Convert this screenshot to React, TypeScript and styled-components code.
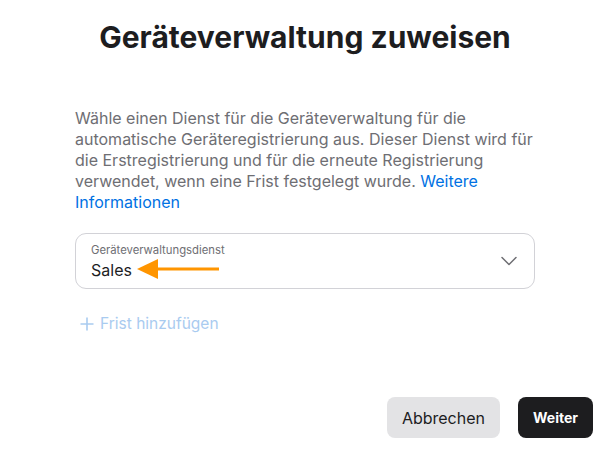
import React from 'react';
import styled, { createGlobalStyle } from 'styled-components';

const GlobalStyle = createGlobalStyle`
  html, body {
    margin: 0;
    padding: 0;
    background: #ffffff;
  }
  body {
    font-family: Inter, "Liberation Sans", sans-serif;
    -webkit-font-smoothing: antialiased;
  }
`;

const Sheet = styled.div`
  width: 610px;
  height: 451px;
  display: flex;
  flex-direction: column;
  box-sizing: border-box;
  padding: 18px 17px 0 75px;
`;

const Title = styled.h1`
  margin: 0 58px 0 0;
  font-size: 30px;
  line-height: 38px;
  font-weight: 700;
  color: #1d1d1f;
  text-align: center;
`;

const Body = styled.div`
  width: 460px;
  display: flex;
  flex-direction: column;
`;

const Description = styled.p`
  margin: 52px 0 0 0;
  font-size: 16px;
  line-height: 21px;
  color: #6e6e73;
`;

const Link = styled.a`
  color: #0071e3;
  text-decoration: none;
`;

const SelectBox = styled.div`
  position: relative;
  margin-top: 20px;
  height: 56px;
  box-sizing: border-box;
  border: 1px solid #d2d2d7;
  border-radius: 11px;
  padding: 8px 15px 0 15px;
  display: flex;
  align-items: center;
`;

const SelectText = styled.div`
  flex: 1;
  display: flex;
  flex-direction: column;
  align-self: flex-start;
`;

const SelectLabel = styled.span`
  font-size: 11.3px;
  line-height: 16px;
  color: #6e6e73;
`;

const SelectValue = styled.span`
  font-size: 16px;
  line-height: 22px;
  color: #1d1d1f;
  margin-top: 1px;
`;

const Chevron = styled.svg`
  width: 16px;
  height: 10px;
  margin-top: -8px;
  margin-right: 2px;
`;

const Pointer = styled.svg`
  position: absolute;
  left: 60px;
  top: 24px;
  width: 84px;
  height: 22px;
`;

const AddRow = styled.div`
  margin-top: 25px;
  display: flex;
  align-items: center;
  gap: 6px;
  font-size: 15.5px;
  line-height: 20px;
  color: #a9cbf0;
  padding-left: 5px;
`;

const Footer = styled.div`
  margin-top: auto;
  margin-bottom: 13px;
  display: flex;
  justify-content: flex-end;
  gap: 18px;
`;

const Button = styled.button<{ $primary?: boolean }>`
  height: 41px;
  border: none;
  border-radius: 8px;
  padding: 0 15px;
  font-family: Inter, "Liberation Sans", sans-serif;
  font-size: ${(p) => (p.$primary ? '14px' : '16px')};
  font-weight: ${(p) => (p.$primary ? 700 : 400)};
  background: ${(p) => (p.$primary ? '#1d1d1f' : '#e3e3e5')};
  color: ${(p) => (p.$primary ? '#ffffff' : '#1d1d1f')};
  cursor: pointer;
`;

export default function App() {
  return (
    <>
      <GlobalStyle />
      <Sheet>
        <Title>Geräteverwaltung zuweisen</Title>
        <Body>
          <Description>
            Wähle einen Dienst für die Geräteverwaltung für die automatische Geräteregistrierung aus. Dieser Dienst wird für die Erstregistrierung und für die erneute Registrierung verwendet, wenn eine Frist festgelegt wurde.{' '}
            <Link href="#">Weitere Informationen</Link>
          </Description>
          <SelectBox>
            <SelectText>
              <SelectLabel>Geräteverwaltungsdienst</SelectLabel>
              <SelectValue>Sales</SelectValue>
            </SelectText>
            <Chevron viewBox="0 0 16 10">
              <path d="M1 1.5 L8 8.5 L15 1.5" fill="none" stroke="#6e6e73" strokeWidth="1.5" strokeLinecap="round" strokeLinejoin="round" />
            </Chevron>
            <Pointer viewBox="0 0 84 22">
              <polygon points="1,11 22,1 22,21" fill="#ff9500" />
              <rect x="20" y="9.5" width="63" height="3" fill="#ff9500" />
            </Pointer>
          </SelectBox>
          <AddRow>
            <svg width="14" height="14" viewBox="0 0 14 14">
              <path d="M7 0.5 V13.5 M0.5 7 H13.5" stroke="#a9cbf0" strokeWidth="1.6" />
            </svg>
            Frist hinzufügen
          </AddRow>
        </Body>
        <Footer>
          <Button>Abbrechen</Button>
          <Button $primary>Weiter</Button>
        </Footer>
      </Sheet>
    </>
  );
}
